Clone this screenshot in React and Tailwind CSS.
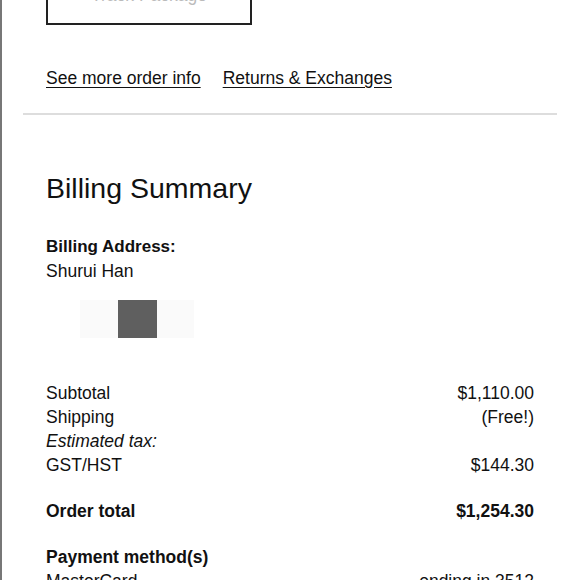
export default function App() {
  return (
    <div className="w-[580px] h-[580px] overflow-hidden bg-white border-l-2 border-[#777] text-[#111]" style={{ fontFamily: '"Liberation Sans", Arial, sans-serif' }}>
      <div className="pl-[21px] pr-[23px]">
        <div className="px-[23px]">
          <div className="mt-[-34px] w-[206px] h-[59px] border-2 border-[#222] flex items-center justify-center text-[17.5px] text-[#bbb]">
            Track Package
          </div>
          <div className="mt-[42px] flex gap-[22px] text-[17.5px] leading-[22px]">
            <span className="underline underline-offset-[3px]">See more order info</span>
            <span className="underline underline-offset-[3px]">Returns &amp; Exchanges</span>
          </div>
        </div>
        <div className="mt-[24px] h-[2px] bg-[#ddd]" />
        <div className="px-[23px]">
          <h1 className="mt-[56px] text-[28.5px] leading-[34px]">Billing Summary</h1>
          <div className="mt-[31px] font-bold text-[17px] leading-[22px]">Billing Address:</div>
          <div className="mt-[2px] h-[17px] overflow-hidden text-[17.5px] leading-[22px]">Shurui Han</div>
          <div className="mt-[23px] ml-[34px] w-[114px] h-[38px] bg-[#fafafa] flex justify-center">
            <div className="w-[39px] h-[38px] bg-[#5f5f5f]" />
          </div>
          <div className="mt-[43px] text-[17.5px] leading-[24px]">
            <div className="flex justify-between"><span>Subtotal</span><span>$1,110.00</span></div>
            <div className="flex justify-between"><span>Shipping</span><span>(Free!)</span></div>
            <div className="italic">Estimated tax:</div>
            <div className="flex justify-between"><span>GST/HST</span><span>$144.30</span></div>
          </div>
          <div className="mt-[22px] flex justify-between font-bold text-[17.5px] leading-[24px]">
            <span>Order total</span><span>$1,254.30</span>
          </div>
          <div className="mt-[22px] font-bold text-[17.5px] leading-[24px]">Payment method(s)</div>
          <div className="flex justify-between text-[17.5px] leading-[24px]">
            <span>MasterCard</span><span>ending in 3512</span>
          </div>
        </div>
      </div>
    </div>
  );
}
